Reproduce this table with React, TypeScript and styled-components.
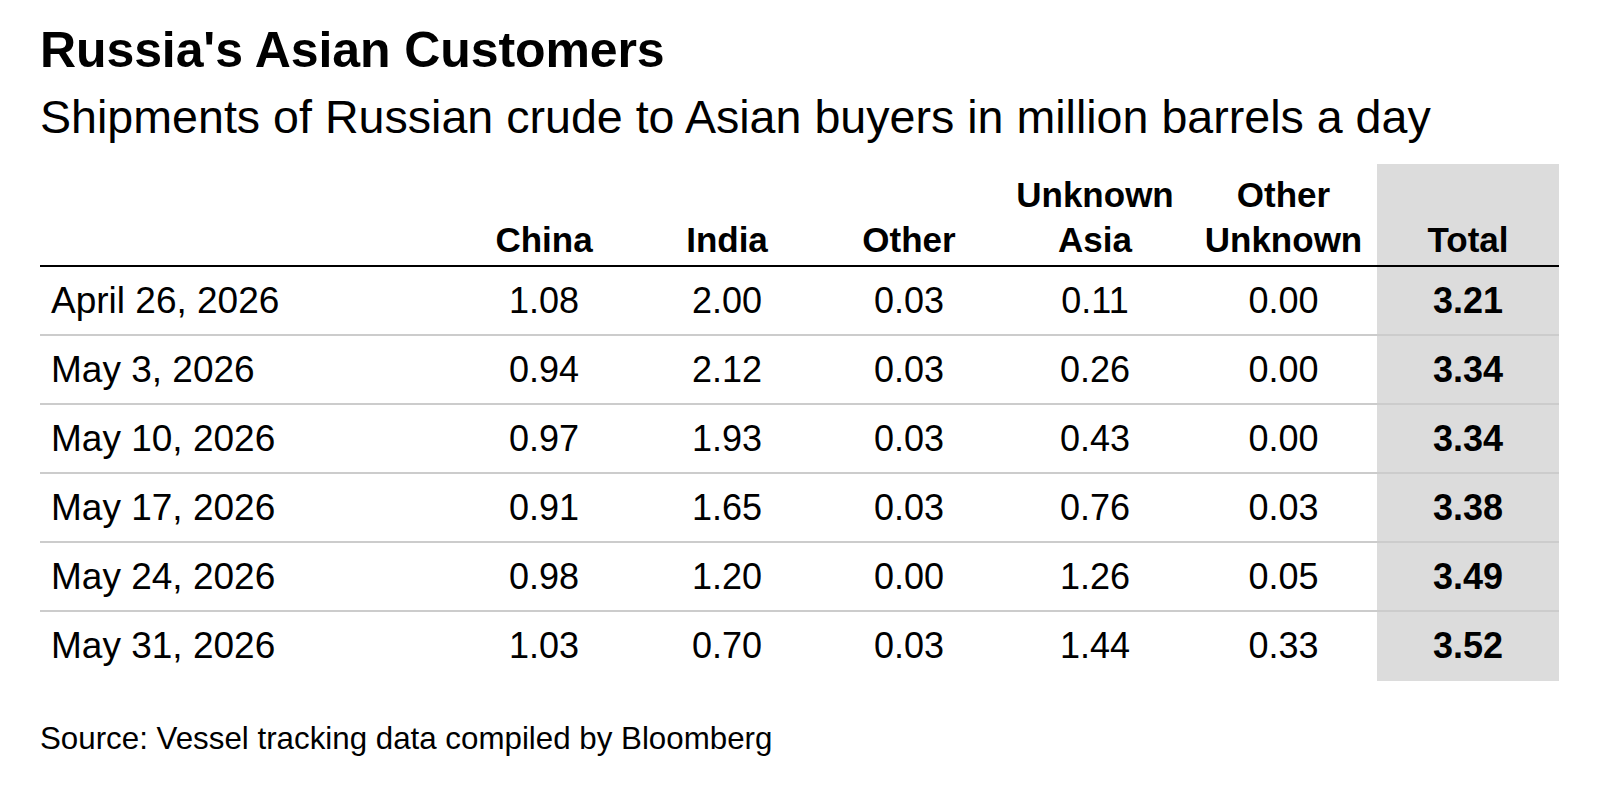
import styled, { createGlobalStyle } from "styled-components";

const GlobalStyle = createGlobalStyle`
    html, body {
        margin: 0;
        padding: 0;
        background: #fff;
    }
    body {
        font-family: "Liberation Sans", Arial, Helvetica, sans-serif;
        color: #000;
    }
`;

const Page = styled.div`
    display: flex;
    flex-direction: column;
    width: 1519px;
    padding: 22px 0 0 40px;
`;
const Title = styled.h1`
    margin: 0;
    font-size: 50px;
    line-height: 56px;
    font-weight: 700;
    letter-spacing: -0.1px;
`;
const Subtitle = styled.h2`
    margin: 13px 0 0;
    font-size: 46.6px;
    line-height: 52px;
    font-weight: 400;
`;
const Table = styled.table`
    margin-top: 21px;
    width: 1519px;
    table-layout: fixed;
    border-collapse: separate;
    border-spacing: 0;
`;
const HeadCell = styled.th<{ $total?: boolean }>`
    padding: 8px 0 3px;
    font-size: 35px;
    line-height: 45px;
    font-weight: 700;
    text-align: center;
    vertical-align: bottom;
    border-bottom: 2px solid #000;
    background: ${(p) => (p.$total ? "#dcdcdc" : "transparent")};
`;
const Cell = styled.td<{ $total?: boolean; $date?: boolean; $last?: boolean }>`
    padding: ${(p) => (p.$date ? "0 0 0 11px" : "0")};
    height: 67px;
    font-size: ${(p) => (p.$date ? "37px" : "36px")};
    line-height: 67px;
    font-weight: ${(p) => (p.$total ? 700 : 400)};
    text-align: ${(p) => (p.$date ? "left" : "center")};
    white-space: nowrap;
    border-bottom: 2px solid ${(p) => (p.$last ? "transparent" : "#cccccc")};
    background: ${(p) => (p.$total ? "#dcdcdc" : "transparent")};
`;
const Source = styled.p`
    margin: 40px 0 0;
    font-size: 31.3px;
    line-height: 36px;
`;

const widths = [412, 184, 182, 182, 190, 187, 182];
const headers = ["", "China", "India", "Other", "Unknown\nAsia", "Other\nUnknown"];

const rows = [
    ["April 26, 2026", "1.08", "2.00", "0.03", "0.11", "0.00", "3.21"],
    ["May 3, 2026", "0.94", "2.12", "0.03", "0.26", "0.00", "3.34"],
    ["May 10, 2026", "0.97", "1.93", "0.03", "0.43", "0.00", "3.34"],
    ["May 17, 2026", "0.91", "1.65", "0.03", "0.76", "0.03", "3.38"],
    ["May 24, 2026", "0.98", "1.20", "0.00", "1.26", "0.05", "3.49"],
    ["May 31, 2026", "1.03", "0.70", "0.03", "1.44", "0.33", "3.52"],
];

export default function App() {
    return (
        <>
            <GlobalStyle />
            <Page>
                <Title>Russia's Asian Customers</Title>
                <Subtitle>
                    Shipments of Russian crude to Asian buyers in million barrels a day
                </Subtitle>
                <Table>
                    <colgroup>
                        {widths.map((w, i) => (
                            <col key={i} style={{ width: w }} />
                        ))}
                    </colgroup>
                    <thead>
                        <tr>
                            {headers.map((h, i) => (
                                <HeadCell key={i}>
                                    {h.split("\n").map((line, j) => (
                                        <div key={j}>{line}</div>
                                    ))}
                                </HeadCell>
                            ))}
                            <HeadCell $total>Total</HeadCell>
                        </tr>
                    </thead>
                    <tbody>
                        {rows.map((row, r) => (
                            <tr key={r}>
                                {row.map((v, c) => (
                                    <Cell
                                        key={c}
                                        $date={c === 0}
                                        $total={c === row.length - 1}
                                        $last={r === rows.length - 1}
                                    >
                                        {v}
                                    </Cell>
                                ))}
                            </tr>
                        ))}
                    </tbody>
                </Table>
                <Source>Source: Vessel tracking data compiled by Bloomberg</Source>
            </Page>
        </>
    );
}
